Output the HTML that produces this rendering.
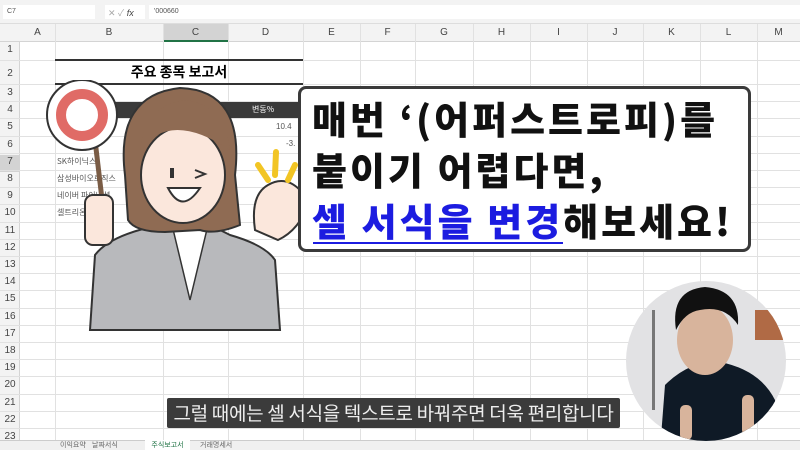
<!DOCTYPE html>
<html><head><meta charset="utf-8"><style>
*{margin:0;padding:0;box-sizing:border-box}
body{width:800px;height:450px;overflow:hidden;background:#fff;position:relative;font-family:"Liberation Sans","Noto Sans CJK KR",sans-serif}
.abs{position:absolute}
.vl{position:absolute;top:24px;bottom:10px;width:1px;background:#e1e1e1}
.hl{position:absolute;left:0;right:0;height:1px;background:#e1e1e1}
.ch{position:absolute;top:24px;height:18px;font-size:10px;color:#444;text-align:center;line-height:18px}
.rh{position:absolute;left:0;width:20px;font-size:10px;color:#444;text-align:center}
.k{font-family:"Noto Sans CJK KR",sans-serif}
</style></head><body>
<div class="abs" style="left:0;top:0;width:800px;height:24px;background:#f3f3f3;border-bottom:1px solid #ddd"></div>
<div class="abs" style="left:3px;top:5px;width:92px;height:14px;background:#fff;font-size:7px;color:#555;padding:3px 4px">C7</div>
<div class="abs" style="left:105px;top:5px;width:40px;height:14px;background:#fff;font-size:9px;color:#aaa;padding:1px 3px">✕ ✓ <i style="color:#444">fx</i></div>
<div class="abs" style="left:149px;top:5px;width:651px;height:14px;background:#fff;font-size:7px;color:#555;padding:3px 5px">'000660</div>
<div class="abs" style="left:0;top:24px;width:800px;height:18px;background:#f3f3f3;border-bottom:1px solid #d4d4d4"></div>
<div class="abs" style="left:163px;top:24px;width:65px;height:18px;background:#d3d3d3;border-bottom:2px solid #217346"></div>
<div class="abs" style="left:0;top:42px;width:20px;height:408px;background:#f3f3f3;border-right:1px solid #d4d4d4"></div>
<div class="abs" style="left:0;top:155px;width:20px;height:17px;background:#d3d3d3"></div>
<div class="vl" style="left:55px"></div><div class="vl" style="left:163px"></div><div class="vl" style="left:228px"></div><div class="vl" style="left:303px"></div><div class="vl" style="left:360px"></div><div class="vl" style="left:415px"></div><div class="vl" style="left:473px"></div><div class="vl" style="left:530px"></div><div class="vl" style="left:587px"></div><div class="vl" style="left:643px"></div><div class="vl" style="left:700px"></div><div class="vl" style="left:757px"></div>
<div class="ch" style="left:20px;width:35px">A</div><div class="ch" style="left:55px;width:108px">B</div><div class="ch" style="left:163px;width:65px">C</div><div class="ch" style="left:228px;width:75px">D</div><div class="ch" style="left:303px;width:57px">E</div><div class="ch" style="left:360px;width:55px">F</div><div class="ch" style="left:415px;width:58px">G</div><div class="ch" style="left:473px;width:57px">H</div><div class="ch" style="left:530px;width:57px">I</div><div class="ch" style="left:587px;width:56px">J</div><div class="ch" style="left:643px;width:57px">K</div><div class="ch" style="left:700px;width:57px">L</div><div class="ch" style="left:757px;width:43px">M</div>
<div class="hl" style="top:60px"></div><div class="hl" style="top:84px"></div>
<div id="rows"></div>
<script>
var r=document.getElementById('rows'),h='';
h+='<div class="rh" style="top:44px">1</div><div class="rh" style="top:68px">2</div>';
for(var i=3;i<=23;i++){var t=84+(i-3)*17.2;h+='<div class="hl" style="top:'+(t+17.2).toFixed(0)+'px"></div><div class="rh" style="top:'+(t+3).toFixed(0)+'px">'+i+'</div>';}
r.innerHTML=h;
</script>
<div class="abs" style="left:55px;top:59px;width:248px;height:2px;background:#333"></div>
<div class="abs" style="left:55px;top:83px;width:248px;height:2px;background:#333"></div>
<div class="abs k" style="left:55px;top:61px;width:248px;text-align:center;font-size:14px;font-weight:700;line-height:22px">주요 종목 보고서</div>
<div class="abs" style="left:55px;top:102px;width:248px;height:16px;background:#3a3a3a"></div>
<div class="abs k" style="left:252px;top:102px;font-size:8px;color:#fff;line-height:16px">변동%</div>
<div class="abs" style="left:276px;top:122px;font-size:8px;color:#555">10.4</div>
<div class="abs" style="left:286px;top:139px;font-size:8px;color:#555">-3.</div>
<div class="abs k" style="left:57px;top:156px;font-size:8px;color:#555">SK하이닉스</div>
<div class="abs k" style="left:57px;top:173px;font-size:8px;color:#555">삼성바이오로직스</div>
<div class="abs k" style="left:57px;top:190px;font-size:8px;color:#555">네이버 파이낸셜</div>
<div class="abs k" style="left:57px;top:207px;font-size:8px;color:#555">셀트리온</div>
<!-- character -->
<svg class="abs" style="left:40px;top:80px" width="270" height="260" viewBox="40 80 270 260">
<line x1="95" y1="140" x2="108" y2="250" stroke="#7a5c45" stroke-width="5"/>
<circle cx="82" cy="115" r="35" fill="#fff" stroke="#333" stroke-width="2"/>
<circle cx="82" cy="115" r="21" fill="none" stroke="#e06b66" stroke-width="10"/>
<path d="M90 330 L95 255 Q110 235 160 225 L190 215 L230 235 Q265 245 275 260 L280 330 Z" fill="#b8b9bc" stroke="#333" stroke-width="2"/>
<path d="M172 225 L190 300 L208 225 Z" fill="#fff" stroke="#333" stroke-width="1.5"/>
<path d="M125 175 Q115 95 180 88 Q245 90 235 175 L240 225 Q215 235 200 230 L165 232 Q135 232 128 220 Z" fill="#8f6b53" stroke="#333" stroke-width="2"/>
<ellipse cx="183" cy="175" rx="42" ry="48" fill="#fbe7dc" stroke="#333" stroke-width="2"/>
<path d="M140 150 Q170 110 230 150 Q225 105 185 100 Q145 105 140 150Z" fill="#8f6b53"/>
<path d="M168 188 Q182 215 200 188 Z" fill="#fff" stroke="#333" stroke-width="2"/>
<rect x="170" y="168" width="4" height="10" fill="#333"/>
<path d="M195 170 L205 174 L195 178" fill="none" stroke="#333" stroke-width="2"/>
<rect x="85" y="195" width="28" height="50" rx="8" fill="#fbe7dc" stroke="#333" stroke-width="2"/>
<path d="M255 230 Q250 195 268 185 Q285 175 300 190 L305 180 L310 200 Q300 230 278 240 Z" fill="#fbe7dc" stroke="#333" stroke-width="2"/>
<path d="M258 165 L268 180 M276 152 L275 175 M295 165 L288 180" stroke="#f2c524" stroke-width="6" stroke-linecap="round"/>
</svg>
<!-- callout -->
<div class="abs" style="left:298px;top:86px;width:453px;height:166px;background:#fff;border:3px solid #3a3a3a;border-radius:8px"></div>
<div class="abs k" style="left:312px;top:92px;font-size:38px;font-weight:900;line-height:51px;letter-spacing:3px;color:#111;white-space:nowrap">매번 ‘(어퍼스트로피)를<br>붙이기 어렵다면,<br><span style="color:#1c1ce0">셀 서식을 변경</span>해보세요!</div>
<div class="abs" style="left:313px;top:242px;width:250px;height:2px;background:#1c1ce0"></div>
<!-- subtitle -->
<div class="abs k" style="left:167px;top:398px;width:453px;height:30px;background:#3b3b3b;border-radius:2px;color:#eee;font-size:19px;line-height:30px;text-align:center;white-space:nowrap;letter-spacing:-0.3px">그럴 때에는 셀 서식을 텍스트로 바꿔주면 더욱 편리합니다</div>
<!-- sheet tabs -->
<div class="abs" style="left:0;top:440px;width:800px;height:10px;background:#f0f0f0;border-top:1px solid #ccc"></div>
<div class="abs k" style="left:145px;top:440px;width:45px;height:10px;background:#fff;font-size:7px;color:#217346;text-align:center;line-height:10px">주식보고서</div>
<div class="abs k" style="left:60px;top:440px;font-size:7px;color:#666;line-height:10px">이익요약&nbsp;&nbsp;&nbsp;&nbsp;날짜서식</div>
<div class="abs k" style="left:200px;top:440px;font-size:7px;color:#666;line-height:10px">거래명세서</div>
<!-- webcam -->
<svg class="abs" style="left:620px;top:280px" width="180" height="170" viewBox="620 280 180 170">
<defs><clipPath id="c"><circle cx="706" cy="361" r="80"/></clipPath></defs>
<circle cx="706" cy="361" r="80" fill="#e2e2e4"/>
<g clip-path="url(#c)">
<rect x="755" y="310" width="30" height="30" fill="#b06a45"/>
<rect x="652" y="310" width="3" height="100" fill="#777"/>
<path d="M660 450 L665 385 Q690 360 720 362 Q760 370 775 400 L780 450 Z" fill="#0f1a26"/>
<ellipse cx="705" cy="340" rx="28" ry="35" fill="#d8b49c"/>
<path d="M676 330 Q670 290 705 287 Q740 290 738 325 Q725 305 700 310 Q685 312 676 330Z" fill="#111"/>
<rect x="680" y="405" width="12" height="35" rx="5" fill="#d8b49c"/>
<rect x="742" y="395" width="12" height="40" rx="5" fill="#d8b49c"/>
</g>
</svg>
</body></html>
